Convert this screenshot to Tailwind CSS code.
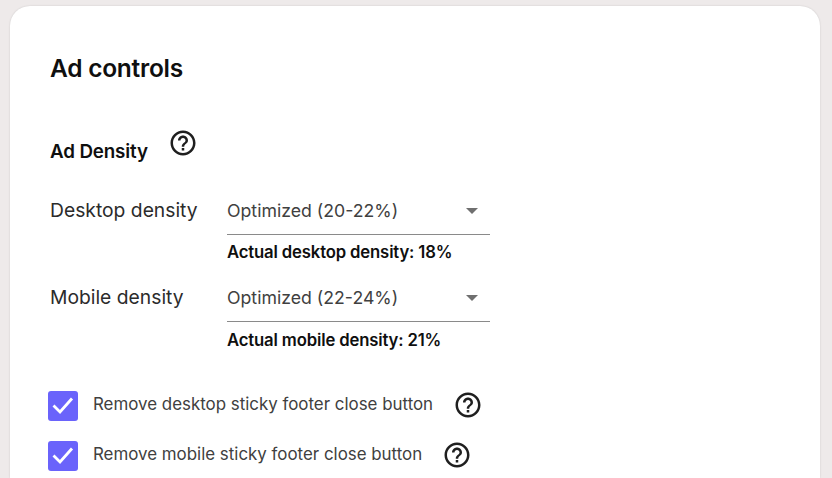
<!DOCTYPE html>
<html lang="en">
<head>
    <meta charset="utf-8">
    <title>Ad controls</title>
    <script src="https://cdn.jsdelivr.net/npm/@tailwindcss/browser@4"></script>
</head>
<body class="h-[478px] overflow-hidden bg-[#eeeaea] font-['Inter',sans-serif] text-[#0f0f0f]">
    <div class="ml-[10px] mr-[12px] mt-[6px] h-[472px] overflow-hidden rounded-t-[20px] bg-white pl-[40px] pt-[47px] shadow-[0_0_2px_rgba(0,0,0,0.15)]">
        <h1 class="text-[24.500px] leading-[30px] font-semibold tracking-[-0.25px]">Ad controls</h1>

        <div class="mt-[49px] flex h-[36px] items-start">
            <h2 class="mt-[9px] text-[18.800px] leading-[22px] font-semibold tracking-[-0.15px]">Ad Density</h2>
            <svg class="ml-[20px] mt-[-4px]" width="30" height="30" viewBox="0 0 24 24" fill="#1f1f1f"><path d="M11 18h2v-2h-2v2zm1-16C6.480 2 2 6.480 2 12s4.480 10 10 10 10-4.480 10-10S17.520 2 12 2zm0 18c-4.410 0-8-3.590-8-8s3.590-8 8-8 8 3.590 8 8-3.590 8-8 8zm0-14c-2.210 0-4 1.790-4 4h2c0-1.100.9-2 2-2s2 .9 2 2c0 2-3 1.750-3 5h2c0-2.250 3-2.500 3-5 0-2.210-1.790-4-4-4z"/></svg>
        </div>

        <div class="mt-[20px] flex">
            <div class="w-[177px] pt-[10px] text-[19.300px] leading-[24px] text-[#2b2b2b]">Desktop density</div>
            <div class="w-[263px]">
                <div class="flex h-[47px] items-center justify-between border-b border-[#8a8a8a] pr-[12px] text-[17.700px] text-[#404040]">
                    <span>Optimized (20-22%)</span>
                    <span class="h-0 w-0 border-x-[6.500px] border-t-[6.500px] border-x-transparent border-t-[#6f6f6f]"></span>
                </div>
                <p class="mt-[7px] text-[16.700px] leading-[20px] font-semibold tracking-[-0.15px]">Actual desktop density: 18%</p>
            </div>
        </div>

        <div class="mt-[13px] flex">
            <div class="w-[177px] pt-[10px] text-[19.300px] leading-[24px] text-[#2b2b2b]">Mobile density</div>
            <div class="w-[263px]">
                <div class="flex h-[47px] items-center justify-between border-b border-[#8a8a8a] pr-[12px] text-[17.700px] text-[#404040]">
                    <span>Optimized (22-24%)</span>
                    <span class="h-0 w-0 border-x-[6.500px] border-t-[6.500px] border-x-transparent border-t-[#6f6f6f]"></span>
                </div>
                <p class="mt-[8px] text-[16.700px] leading-[20px] font-semibold tracking-[-0.15px]">Actual mobile density: 21%</p>
            </div>
        </div>

        <div class="-ml-[2px] mt-[41px] flex h-[30px] items-center">
            <span class="flex h-[30px] w-[30px] items-center justify-center rounded-[3px] bg-[#6a63fb]">
                <svg width="24" height="24" viewBox="0 0 24 24" fill="none" stroke="#fff" stroke-width="2.800"><path d="M2.500 11.500L9 18 21 4.500"/></svg>
            </span>
            <span class="ml-[15px] -mt-[2px] text-[16.900px] text-[#404040]">Remove desktop sticky footer close button</span>
            <svg class="ml-[20px] -mt-[2px]" width="30" height="30" viewBox="0 0 24 24" fill="#1f1f1f"><path d="M11 18h2v-2h-2v2zm1-16C6.480 2 2 6.480 2 12s4.480 10 10 10 10-4.480 10-10S17.520 2 12 2zm0 18c-4.410 0-8-3.590-8-8s3.590-8 8-8 8 3.590 8 8-3.590 8-8 8zm0-14c-2.210 0-4 1.790-4 4h2c0-1.100.9-2 2-2s2 .9 2 2c0 2-3 1.750-3 5h2c0-2.250 3-2.500 3-5 0-2.210-1.790-4-4-4z"/></svg>
        </div>

        <div class="-ml-[2px] mt-[20px] flex h-[30px] items-center">
            <span class="flex h-[30px] w-[30px] items-center justify-center rounded-[3px] bg-[#6a63fb]">
                <svg width="24" height="24" viewBox="0 0 24 24" fill="none" stroke="#fff" stroke-width="2.800"><path d="M2.500 11.500L9 18 21 4.500"/></svg>
            </span>
            <span class="ml-[15px] -mt-[2px] text-[16.900px] text-[#404040]">Remove mobile sticky footer close button</span>
            <svg class="ml-[20px] -mt-[2px]" width="30" height="30" viewBox="0 0 24 24" fill="#1f1f1f"><path d="M11 18h2v-2h-2v2zm1-16C6.480 2 2 6.480 2 12s4.480 10 10 10 10-4.480 10-10S17.520 2 12 2zm0 18c-4.410 0-8-3.590-8-8s3.590-8 8-8 8 3.590 8 8-3.590 8-8 8zm0-14c-2.210 0-4 1.790-4 4h2c0-1.100.9-2 2-2s2 .9 2 2c0 2-3 1.750-3 5h2c0-2.250 3-2.500 3-5 0-2.210-1.790-4-4-4z"/></svg>
        </div>
    </div>
</body>
</html>
